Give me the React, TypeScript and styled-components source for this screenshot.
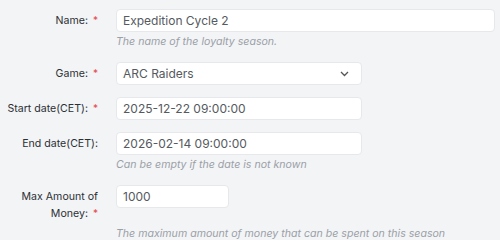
import React from "react";
import styled, { createGlobalStyle } from "styled-components";

const GlobalStyle = createGlobalStyle`
  html, body {
    margin: 0;
    padding: 0;
    background: #f3f4f6;
  }
  body {
    font-family: Inter, "Noto Sans", sans-serif;
    font-size: 11px;
    color: #333;
  }
`;

const Form = styled.div`
  display: flex;
  flex-direction: column;
  gap: 12px;
  padding: 9px 5px 0 0;
  width: 500px;
  box-sizing: border-box;
`;

const Field = styled.div`
  display: grid;
  grid-template-columns: 98px 1fr;
  column-gap: 18px;
  align-items: start;
`;

const Label = styled.label`
  text-align: right;
  padding: 3px 0 2px;
  line-height: 17px;
  font-size: 10.6px;
  color: #2b3035;
`;

const Star = styled.span`
  color: #e5484d;
  margin-left: 5px;
  font-size: 10px;
`;

const InputBox = styled.div<{ $w?: string }>`
  box-sizing: border-box;
  height: 23px;
  width: ${(p) => p.$w ?? "100%"};
  background: #fff;
  border: 1px solid #e6e8eb;
  border-radius: 4px;
  display: flex;
  align-items: center;
  justify-content: space-between;
  padding: 0 12px 0 6px;
  font-size: 12px;
  color: #555a60;
`;

const Hint = styled.div`
  grid-column: 2;
  margin-top: 2px;
  line-height: 16px;
  font-size: 10.6px;
  font-style: italic;
  color: #9aa0a6;
`;

const Chevron = () => (
  <svg width="9" height="6" viewBox="0 0 9 6" fill="none">
    <path d="M1 1l3.5 3.5L8 1" stroke="#555" strokeWidth="1.3" />
  </svg>
);

export default function App() {
  return (
    <>
      <GlobalStyle />
      <Form>
        <Field>
          <Label>
            Name:<Star>*</Star>
          </Label>
          <InputBox>Expedition Cycle 2</InputBox>
          <Hint>The name of the loyalty season.</Hint>
        </Field>
        <Field>
          <Label>
            Game:<Star>*</Star>
          </Label>
          <InputBox $w="246px">
            ARC Raiders
            <Chevron />
          </InputBox>
        </Field>
        <Field>
          <Label>
            Start date(CET):<Star>*</Star>
          </Label>
          <InputBox $w="246px">2025-12-22 09:00:00</InputBox>
        </Field>
        <Field>
          <Label>End date(CET):</Label>
          <InputBox $w="246px">2026-02-14 09:00:00</InputBox>
          <Hint>Can be empty if the date is not known</Hint>
        </Field>
        <Field>
          <Label>
            Max Amount of
            <br />
            Money:<Star>*</Star>
          </Label>
          <InputBox $w="113px">1000</InputBox>
          <Hint>The maximum amount of money that can be spent on this season</Hint>
        </Field>
      </Form>
    </>
  );
}
